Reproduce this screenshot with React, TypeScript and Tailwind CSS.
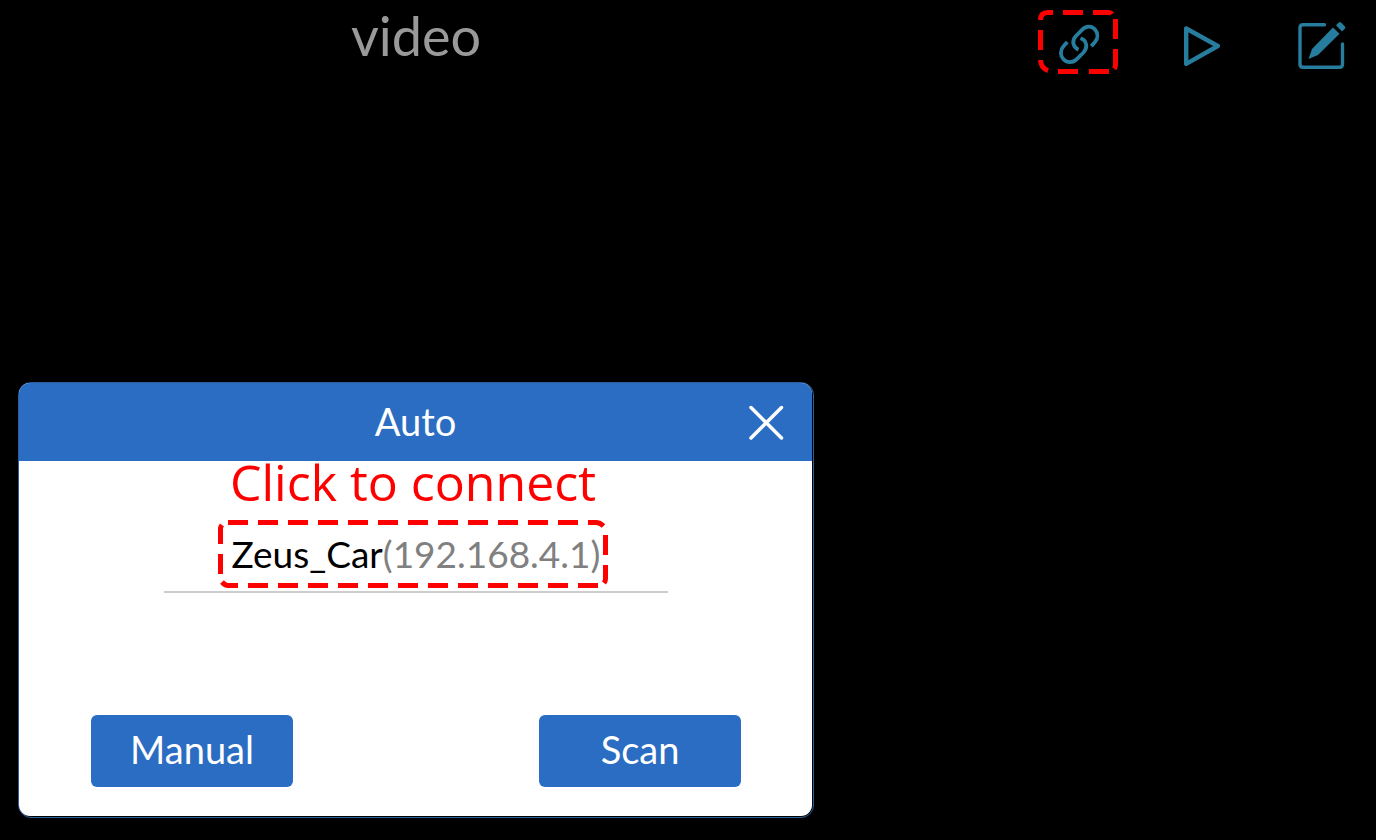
import React from "react";

const LINK_DASHES = [
  "M2.5 10 Q2.5 2.5 10 2.5 H15",
  "M25 2.5 H45",
  "M55 2.5 H71 Q73 2.5 74 4",
  "M77.5 9 V29",
  "M77.5 39 V55 Q77.5 57 76 59",
  "M71 61.5 H50",
  "M40 61.5 H16 Q3 61 2.5 50",
  "M2.5 40 V20",
];

const DEVICE_DASHES = [
  "M10 2.5 H370",
  "M370 2.5 H378 Q382 2.5 385.5 6",
  "M387.5 15 V35",
  "M387.5 45 V59 Q387.5 61 386 63",
  "M30 65.5 H380",
  "M20 65.5 H10 Q7 65.5 4 62",
  "M2.5 54 V34",
  "M2.5 24 V8 Q2.5 7 4 5",
];

function DashFrame({ width, height, dashes }: { width: number; height: number; dashes: string[] }) {
  return (
    <svg
      aria-hidden="true"
      className="pointer-events-none absolute inset-0 h-full w-full"
      viewBox={`0 0 ${width} ${height}`}
      fill="none"
      stroke="#ff0000"
      strokeWidth="5"
    >
      {dashes.map((d) => (
        <path key={d} d={d} strokeDasharray="20 10" />
      ))}
    </svg>
  );
}

function LinkIcon() {
  return (
    <svg className="size-12" viewBox="-2 -2 48 48" fill="none" stroke="#267d9d" strokeWidth="3.8">
      <path d="M35.3 26.3 L39 22 C42.300 18 42 13 39 9.500 C35.500 5.600 30 5.800 26 9.800 L19.300 16.800 C16 20.500 16.500 27 22.500 29.700" />
      <path d="M11.300 22 L7.700 26 C4 30 4 35.500 7.500 39.300 C11 43.200 16.800 43.200 20.800 39.200 L27.500 32.500 C32 27.500 31 20.500 24.500 18.300" />
    </svg>
  );
}

function PlayIcon() {
  return (
    <svg className="h-[42px] w-9" viewBox="0 0 36 42" fill="none" stroke="#267d9d" strokeWidth="4.4" strokeLinejoin="round">
      <path d="M2.2 3.500 L33.800 21 L2.200 38.800 Z" />
    </svg>
  );
}

function EditIcon() {
  return (
    <svg className="size-12" viewBox="0 0 48 48" fill="none">
      <path
        d="M26.5 2.800 H5 Q2 2.800 2 5.800 V42.300 Q2 45.300 5 45.300 H41.500 Q44.500 45.300 44.500 42.300 V22"
        stroke="#267d9d"
        strokeWidth="3.400"
        strokeLinecap="round"
      />
      <path d="M35 5.500 L41.500 11.800 L20 33 L10.500 37 L14 27 Z" fill="#267d9d" />
      <path d="M38 3.200 L40.800 0.400 Q42 -0.500 43.300 0.800 L46.500 4 Q48 5.500 46.800 6.800 L44 9.600 Z" fill="#267d9d" />
    </svg>
  );
}

export default function App() {
  return (
    <main className="grid min-h-screen grid-cols-[832fr_544fr] bg-black font-['Lato',sans-serif]">
      <div className="flex min-w-0 flex-col justify-between px-[18px] pb-[22px]">
        <h1 className="pt-0.5 text-center text-[54px] leading-[68px] text-[#999999]">video</h1>

        <section
          role="dialog"
          aria-labelledby="dialog-title"
          className="rounded-[13px] border border-[#285f9f] pr-px pb-px"
        >
          <div className="overflow-hidden rounded-[11px] bg-white">
            <header className="grid h-[78px] grid-cols-[1fr_auto_1fr] items-center bg-[#2a6dc2] text-white">
              <h2 id="dialog-title" className="col-start-2 pb-0.5 text-[38px] leading-[48px]">
                Auto
              </h2>
              <button type="button" aria-label="Close" className="mr-[27px] justify-self-end">
                <svg
                  className="size-[38px]"
                  viewBox="0 0 38 38"
                  fill="none"
                  stroke="currentColor"
                  strokeWidth="3.5"
                  strokeLinecap="round"
                >
                  <path d="M4 4.500 L34.500 35 M34.500 4.500 L4 35" />
                </svg>
              </button>
            </header>

            <div className="flex flex-col items-center pr-[71px] pb-[29px] pl-[72px]">
              <p className="mr-1.5 pb-4 font-['Open_Sans',sans-serif] text-[50px] leading-[43px] whitespace-nowrap text-[#ff0000]">
                Click to connect
              </p>
              <div className="flex w-[504px] max-w-full justify-center border-b-2 border-[#cccccc] pr-1.5 pb-[3px]">
                <button
                  type="button"
                  className="relative h-[68px] w-[390px] pl-1.5 text-[37px] leading-[48px] whitespace-nowrap text-black"
                >
                  Zeus_Car<span className="text-[#808080]">(192.168.4.1)</span>
                  <DashFrame width={390} height={68} dashes={DEVICE_DASHES} />
                </button>
              </div>
              <div className="mt-[122px] flex w-full justify-between">
                <button type="button" className="h-[72px] w-[202px] rounded-md bg-[#2a6dc2] pb-1 text-[38px] leading-[48px] text-white">
                  Manual
                </button>
                <button type="button" className="h-[72px] w-[202px] rounded-md bg-[#2a6dc2] pb-1 text-[38px] leading-[48px] text-white">
                  Scan
                </button>
              </div>
            </div>
          </div>
        </section>
      </div>

      <nav aria-label="Controls" className="flex items-start justify-end pt-[10px] pr-[30px]">
        <button type="button" aria-label="Connect" className="relative flex h-16 w-20 items-center justify-center">
          <LinkIcon />
          <DashFrame width={80} height={64} dashes={LINK_DASHES} />
        </button>
        <button type="button" aria-label="Play" className="ml-[66px] flex h-[72px] items-center">
          <PlayIcon />
        </button>
        <button type="button" aria-label="Edit" className="ml-[78px] flex h-[72px] items-center">
          <EditIcon />
        </button>
      </nav>
    </main>
  );
}
